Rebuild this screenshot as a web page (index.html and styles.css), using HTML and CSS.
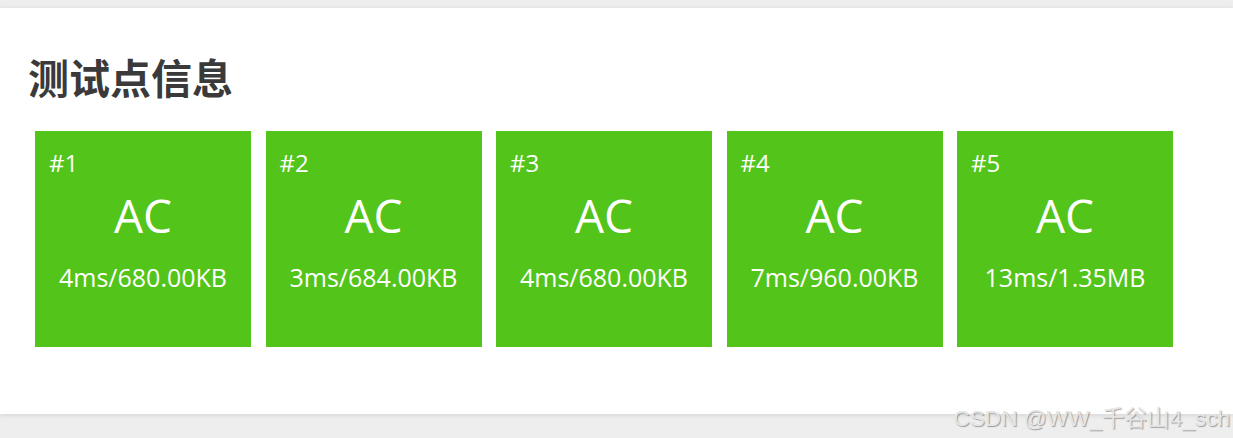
FILE: index.html
```html
<!DOCTYPE html>
<html lang="zh-CN">
<head>
<meta charset="utf-8">
<title>测试点信息</title>
<link rel="stylesheet" href="styles.css">
</head>
<body>
<div class="panel">
  <h2 class="title">测试点信息</h2>
  <div class="cases">
    <div class="case"><div class="case-no">#1</div><div class="case-res">AC</div><div class="case-info">4ms/680.00KB</div></div>
    <div class="case"><div class="case-no">#2</div><div class="case-res">AC</div><div class="case-info">3ms/684.00KB</div></div>
    <div class="case"><div class="case-no">#3</div><div class="case-res">AC</div><div class="case-info">4ms/680.00KB</div></div>
    <div class="case"><div class="case-no">#4</div><div class="case-res">AC</div><div class="case-info">7ms/960.00KB</div></div>
    <div class="case"><div class="case-no">#5</div><div class="case-res">AC</div><div class="case-info">13ms/1.35MB</div></div>
  </div>
</div>
<div class="watermark">CSDN @WW_千谷山4_sch</div>
</body>
</html>
```

FILE: styles.css
```css
html, body {
  margin: 0;
  padding: 0;
}
body {
  background: #eeeeee;
  width: 1233px;
  height: 438px;
  overflow: hidden;
  position: relative;
  font-family: "Open Sans", "Noto Sans", sans-serif;
}
.panel {
  margin-top: 8px;
  height: 406px;
  box-sizing: border-box;
  background: #ffffff;
  box-shadow: 0 1px 5px rgba(0, 0, 0, 0.12);
  padding: 38px 0 0 28px;
}
.title {
  margin: 0;
  font-family: "Noto Sans CJK SC", "Noto Sans", sans-serif;
  font-weight: 700;
  font-size: 41px;
  line-height: 60px;
  color: #3a3a3a;
}
.cases {
  display: flex;
  gap: 14.5px;
  margin-top: 25px;
  padding-left: 7px;
}
.case {
  width: 216px;
  height: 216px;
  flex: none;
  background: #52c41a;
  color: #ffffff;
  box-sizing: border-box;
  padding: 20px 0 0 14px;
  display: flex;
  flex-direction: column;
}
.case-no {
  font-size: 24px;
  line-height: 24px;
}
.case-res {
  font-size: 46px;
  line-height: 46px;
  text-align: center;
  margin: 17px 14px 0 0;
}
.case-info {
  font-size: 25px;
  line-height: 25px;
  text-align: center;
  margin: 27px 14px 0 0;
}
.watermark {
  position: absolute;
  right: 3px;
  bottom: 8px;
  font-family: "Liberation Sans", "Noto Sans CJK SC", sans-serif;
  font-size: 22.6px;
  line-height: 23px;
  color: #e6e6e6;
  text-shadow: 1px 1px 1px rgba(0, 0, 0, 0.35);
  white-space: nowrap;
}
```
